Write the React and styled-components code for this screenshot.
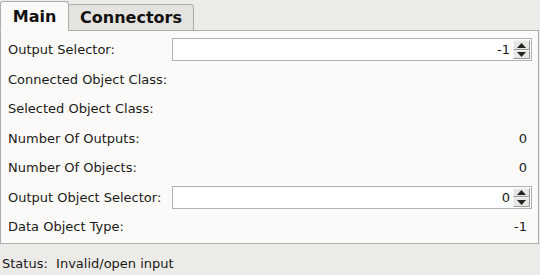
import React from "react";
import styled, { createGlobalStyle } from "styled-components";

const Global = createGlobalStyle`
  html, body { margin: 0; padding: 0; background: #edebe8; }
  body { font-family: "DejaVu Sans", sans-serif; color: #1a1a1a; }
`;

const Window = styled.div`
  width: 540px;
  height: 275px;
  display: flex;
  flex-direction: column;
  background: #edebe8;
  overflow: hidden;
`;

const TabBar = styled.div`
  display: flex;
  align-items: flex-end;
  height: 30px;
  position: relative;
  z-index: 1;
`;

const Tab = styled.div`
  box-sizing: border-box;
  height: ${(p) => (p.$active ? "30px" : "27px")};
  display: flex;
  align-items: center;
  justify-content: center;
  font-weight: bold;
  font-size: 16px;
  color: #111;
  background: ${(p) => (p.$active ? "#fcfaf8" : "#e5e3e0")};
  border: 1px solid #aeaca9;
  border-bottom: ${(p) => (p.$active ? "1px solid #fcfaf8" : "1px solid #aeaca9")};
  border-radius: 3px 3px 0 0;
  margin-bottom: -1px;
  margin-left: ${(p) => (p.$active ? "0" : "-1px")};
  width: ${(p) => p.$w}px;
  padding-top: ${(p) => (p.$active ? "1px" : "0")};
`;

const Panel = styled.div`
  box-sizing: border-box;
  width: 539px;
  height: 214px;
  background: #fcfaf8;
  border: 1px solid #aeaca9;
  padding: 4px 7px 0 7px;
  display: flex;
  flex-direction: column;
`;

const Row = styled.div`
  display: flex;
  align-items: center;
  height: 29.5px;
  font-size: 13px;
`;

const Label = styled.div`
  width: 164px;
  flex: none;
  white-space: nowrap;
`;

const Value = styled.div`
  flex: 1;
  text-align: right;
  padding-right: 4px;
`;

const SpinBox = styled.div`
  box-sizing: border-box;
  flex: 1;
  height: 23px;
  border: 1px solid #b3b1ae;
  background: #fff;
  display: flex;
  align-items: center;
  margin-right: -1px;
`;

const SpinText = styled.div`
  flex: 1;
  text-align: right;
  padding-right: 3px;
`;

const SpinButtons = styled.div`
  width: 17px;
  height: 19px;
  display: flex;
  flex-direction: column;
  margin-right: 1px;
`;

const SpinBtn = styled.div`
  flex: 1;
  background: #e8e6e3;
  border: 1px solid #9a9895;
  border-top-color: #f5f4f2;
  border-left-color: #f5f4f2;
  display: flex;
  align-items: center;
  justify-content: center;
`;

const Arrow = ({ up }) => (
  <svg width="9" height="5" viewBox="0 0 9 5">
    {up ? <polygon points="4.5,0 9,5 0,5" fill="#222" /> : <polygon points="0,0 9,0 4.5,5" fill="#222" />}
  </svg>
);

const Spin = ({ value }) => (
  <SpinBox>
    <SpinText>{value}</SpinText>
    <SpinButtons>
      <SpinBtn><Arrow up /></SpinBtn>
      <SpinBtn><Arrow /></SpinBtn>
    </SpinButtons>
  </SpinBox>
);

const Status = styled.div`
  flex: 1;
  display: flex;
  align-items: center;
  padding-left: 2px;
  padding-top: 7px;
  font-size: 13px;
  white-space: pre;
`;

export default function App() {
  return (
    <Window>
      <Global />
      <TabBar>
        <Tab $active $w={69}>Main</Tab>
        <Tab $w={126}>Connectors</Tab>
      </TabBar>
      <Panel>
        <Row><Label>Output Selector:</Label><Spin value="-1" /></Row>
        <Row><Label>Connected Object Class:</Label><Value></Value></Row>
        <Row><Label>Selected Object Class:</Label><Value></Value></Row>
        <Row><Label>Number Of Outputs:</Label><Value>0</Value></Row>
        <Row><Label>Number Of Objects:</Label><Value>0</Value></Row>
        <Row><Label>Output Object Selector:</Label><Spin value="0" /></Row>
        <Row><Label>Data Object Type:</Label><Value>-1</Value></Row>
      </Panel>
      <Status>{"Status:  Invalid/open input"}</Status>
    </Window>
  );
}
